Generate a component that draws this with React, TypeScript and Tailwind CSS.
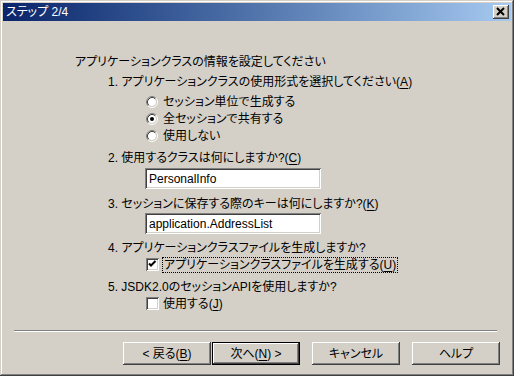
import React from "react";

const font =
  "font-['Liberation_Sans','Noto_Sans_CJK_JP',sans-serif] [font-feature-settings:'palt'] text-[12px] text-black";

// 押下キー付きラベル
function Key({ k }: { k: string }) {
  return (
    <>
      (<span className="underline underline-offset-2">{k}</span>)
    </>
  );
}

function Radio({ checked }: { checked?: boolean }) {
  return (
    <svg width="12" height="12" viewBox="0 0 12 12" className="shrink-0">
      <circle cx="6" cy="6" r="4" fill="#ffffff" />
      <path d="M2.11 9.89 A5.5 5.5 0 0 1 9.89 2.11" fill="none" stroke="#808080" />
      <path d="M9.89 2.11 A5.5 5.5 0 0 1 2.11 9.89" fill="none" stroke="#ffffff" />
      <path d="M2.82 9.18 A4.5 4.5 0 0 1 9.18 2.82" fill="none" stroke="#404040" />
      <path d="M9.18 2.82 A4.5 4.5 0 0 1 2.82 9.18" fill="none" stroke="#d4d0c8" />
      {checked && <circle cx="6" cy="6" r="2" fill="#000000" />}
    </svg>
  );
}

function Check({ checked }: { checked?: boolean }) {
  return (
    <div className="w-[13px] h-[13px] shrink-0 bg-white shadow-[inset_1px_1px_#808080,inset_-1px_-1px_#ffffff,inset_2px_2px_#404040,inset_-2px_-2px_#d4d0c8] flex items-center justify-center">
      {checked && (
        <svg width="13" height="13" viewBox="0 0 13 13">
          <path d="M3 5.5 L5 7.5 L9.5 3" fill="none" stroke="#000" strokeWidth="2" />
        </svg>
      )}
    </div>
  );
}

function Field({ value }: { value: string }) {
  return (
    <div className="ml-[142px] w-[176px] h-[21px] bg-white pl-[4px] flex items-center shadow-[inset_1px_1px_#808080,inset_-1px_-1px_#ffffff,inset_2px_2px_#404040,inset_-2px_-2px_#d4d0c8]">
      {value}
    </div>
  );
}

function Button({
  children,
  primary,
  className = "",
}: {
  children: React.ReactNode;
  primary?: boolean;
  className?: string;
}) {
  return (
    <div
      className={`h-[23px] flex items-center justify-center ${
        primary ? "w-[88px] border border-black" : "w-[88px]"
      } ${className}`}
    >
      <div className="w-full h-full flex items-center justify-center shadow-[inset_-1px_-1px_#404040,inset_1px_1px_#ffffff,inset_-2px_-2px_#808080,inset_2px_2px_#d4d0c8]">
        {children}
      </div>
    </div>
  );
}

function App() {
  return (
    <div
      className={`w-[514px] h-[376px] bg-[#d4d0c8] p-[3px] flex flex-col shadow-[inset_-1px_-1px_#404040,inset_1px_1px_#d4d0c8,inset_-2px_-2px_#808080,inset_2px_2px_#ffffff] ${font}`}
    >
      {/* タイトルバー */}
      <div className="h-[18px] shrink-0 bg-linear-to-r from-[#0a246a] to-[#a6caf0] flex items-center justify-between pl-[3px] pr-[2px]">
        <span className="text-white leading-none">ステップ 2/4</span>
        <div className="w-[16px] h-[14px] bg-[#d4d0c8] flex items-center justify-center shadow-[inset_-1px_-1px_#404040,inset_1px_1px_#ffffff,inset_-2px_-2px_#808080,inset_2px_2px_#d4d0c8]">
          <svg width="16" height="14" viewBox="0 0 16 14">
            <path d="M4 3 L11 10 M11 3 L4 10" stroke="#000" strokeWidth="2" />
          </svg>
        </div>
      </div>

      <div className="flex flex-col pt-[33px]">
        <div className="ml-[72px] h-[16px] leading-[16px]">
          アプリケーションクラスの情報を設定してください
        </div>
        <div className="ml-[105px] mt-[4px] h-[16px] leading-[16px]">
          1. アプリケーションクラスの使用形式を選択してください<Key k="A" />
        </div>
        <div className="mt-[3px] flex flex-col">
          {[
            ["セッション単位で生成する", false],
            ["全セッションで共有する", true],
            ["使用しない", false],
          ].map(([label, on]) => (
            <div key={label as string} className="ml-[143px] h-[17px] flex items-center gap-[5px]">
              <Radio checked={on as boolean} />
              <span>{label as string}</span>
            </div>
          ))}
        </div>
        <div className="ml-[105px] mt-[6px] h-[16px] leading-[16px]">
          2. 使用するクラスは何にしますか?<Key k="C" />
        </div>
        <div className="mt-[2px]">
          <Field value="PersonalInfo" />
        </div>
        <div className="ml-[105px] mt-[7px] h-[16px] leading-[16px]">
          3. セッションに保存する際のキーは何にしますか?<Key k="K" />
        </div>
        <div className="mt-[1px]">
          <Field value="application.AddressList" />
        </div>
        <div className="ml-[105px] mt-[6px] h-[16px] leading-[16px]">
          4. アプリケーションクラスファイルを生成しますか?
        </div>
        <div className="ml-[143px] h-[17px] flex items-center gap-[3px]">
          <Check checked />
          <span className="border border-dotted border-black px-[1px] leading-[14px]">
            アプリケーションクラスファイルを生成する<Key k="U" />
          </span>
        </div>
        <div className="ml-[105px] mt-[6px] h-[16px] leading-[16px]">
          5. JSDK2.0のセッションAPIを使用しますか?
        </div>
        <div className="ml-[143px] h-[17px] flex items-center gap-[4px]">
          <Check />
          <span>
            使用する<Key k="J" />
          </span>
        </div>

        {/* 区切り線 */}
        <div className="ml-[11px] mt-[18px] w-[483px] border-t border-t-[#808080] border-b border-b-white" />

        <div className="mt-[10px] ml-[120px] flex">
          <Button className="w-[87px]">
            &lt; 戻る<Key k="B" />
          </Button>
          <Button primary className="ml-[1px]">
            次へ<Key k="N" /> &gt;
          </Button>
          <Button className="ml-[12px]">キャンセル</Button>
          <Button className="ml-[12px]">ヘルプ</Button>
        </div>
      </div>
    </div>
  );
}

export default App;
